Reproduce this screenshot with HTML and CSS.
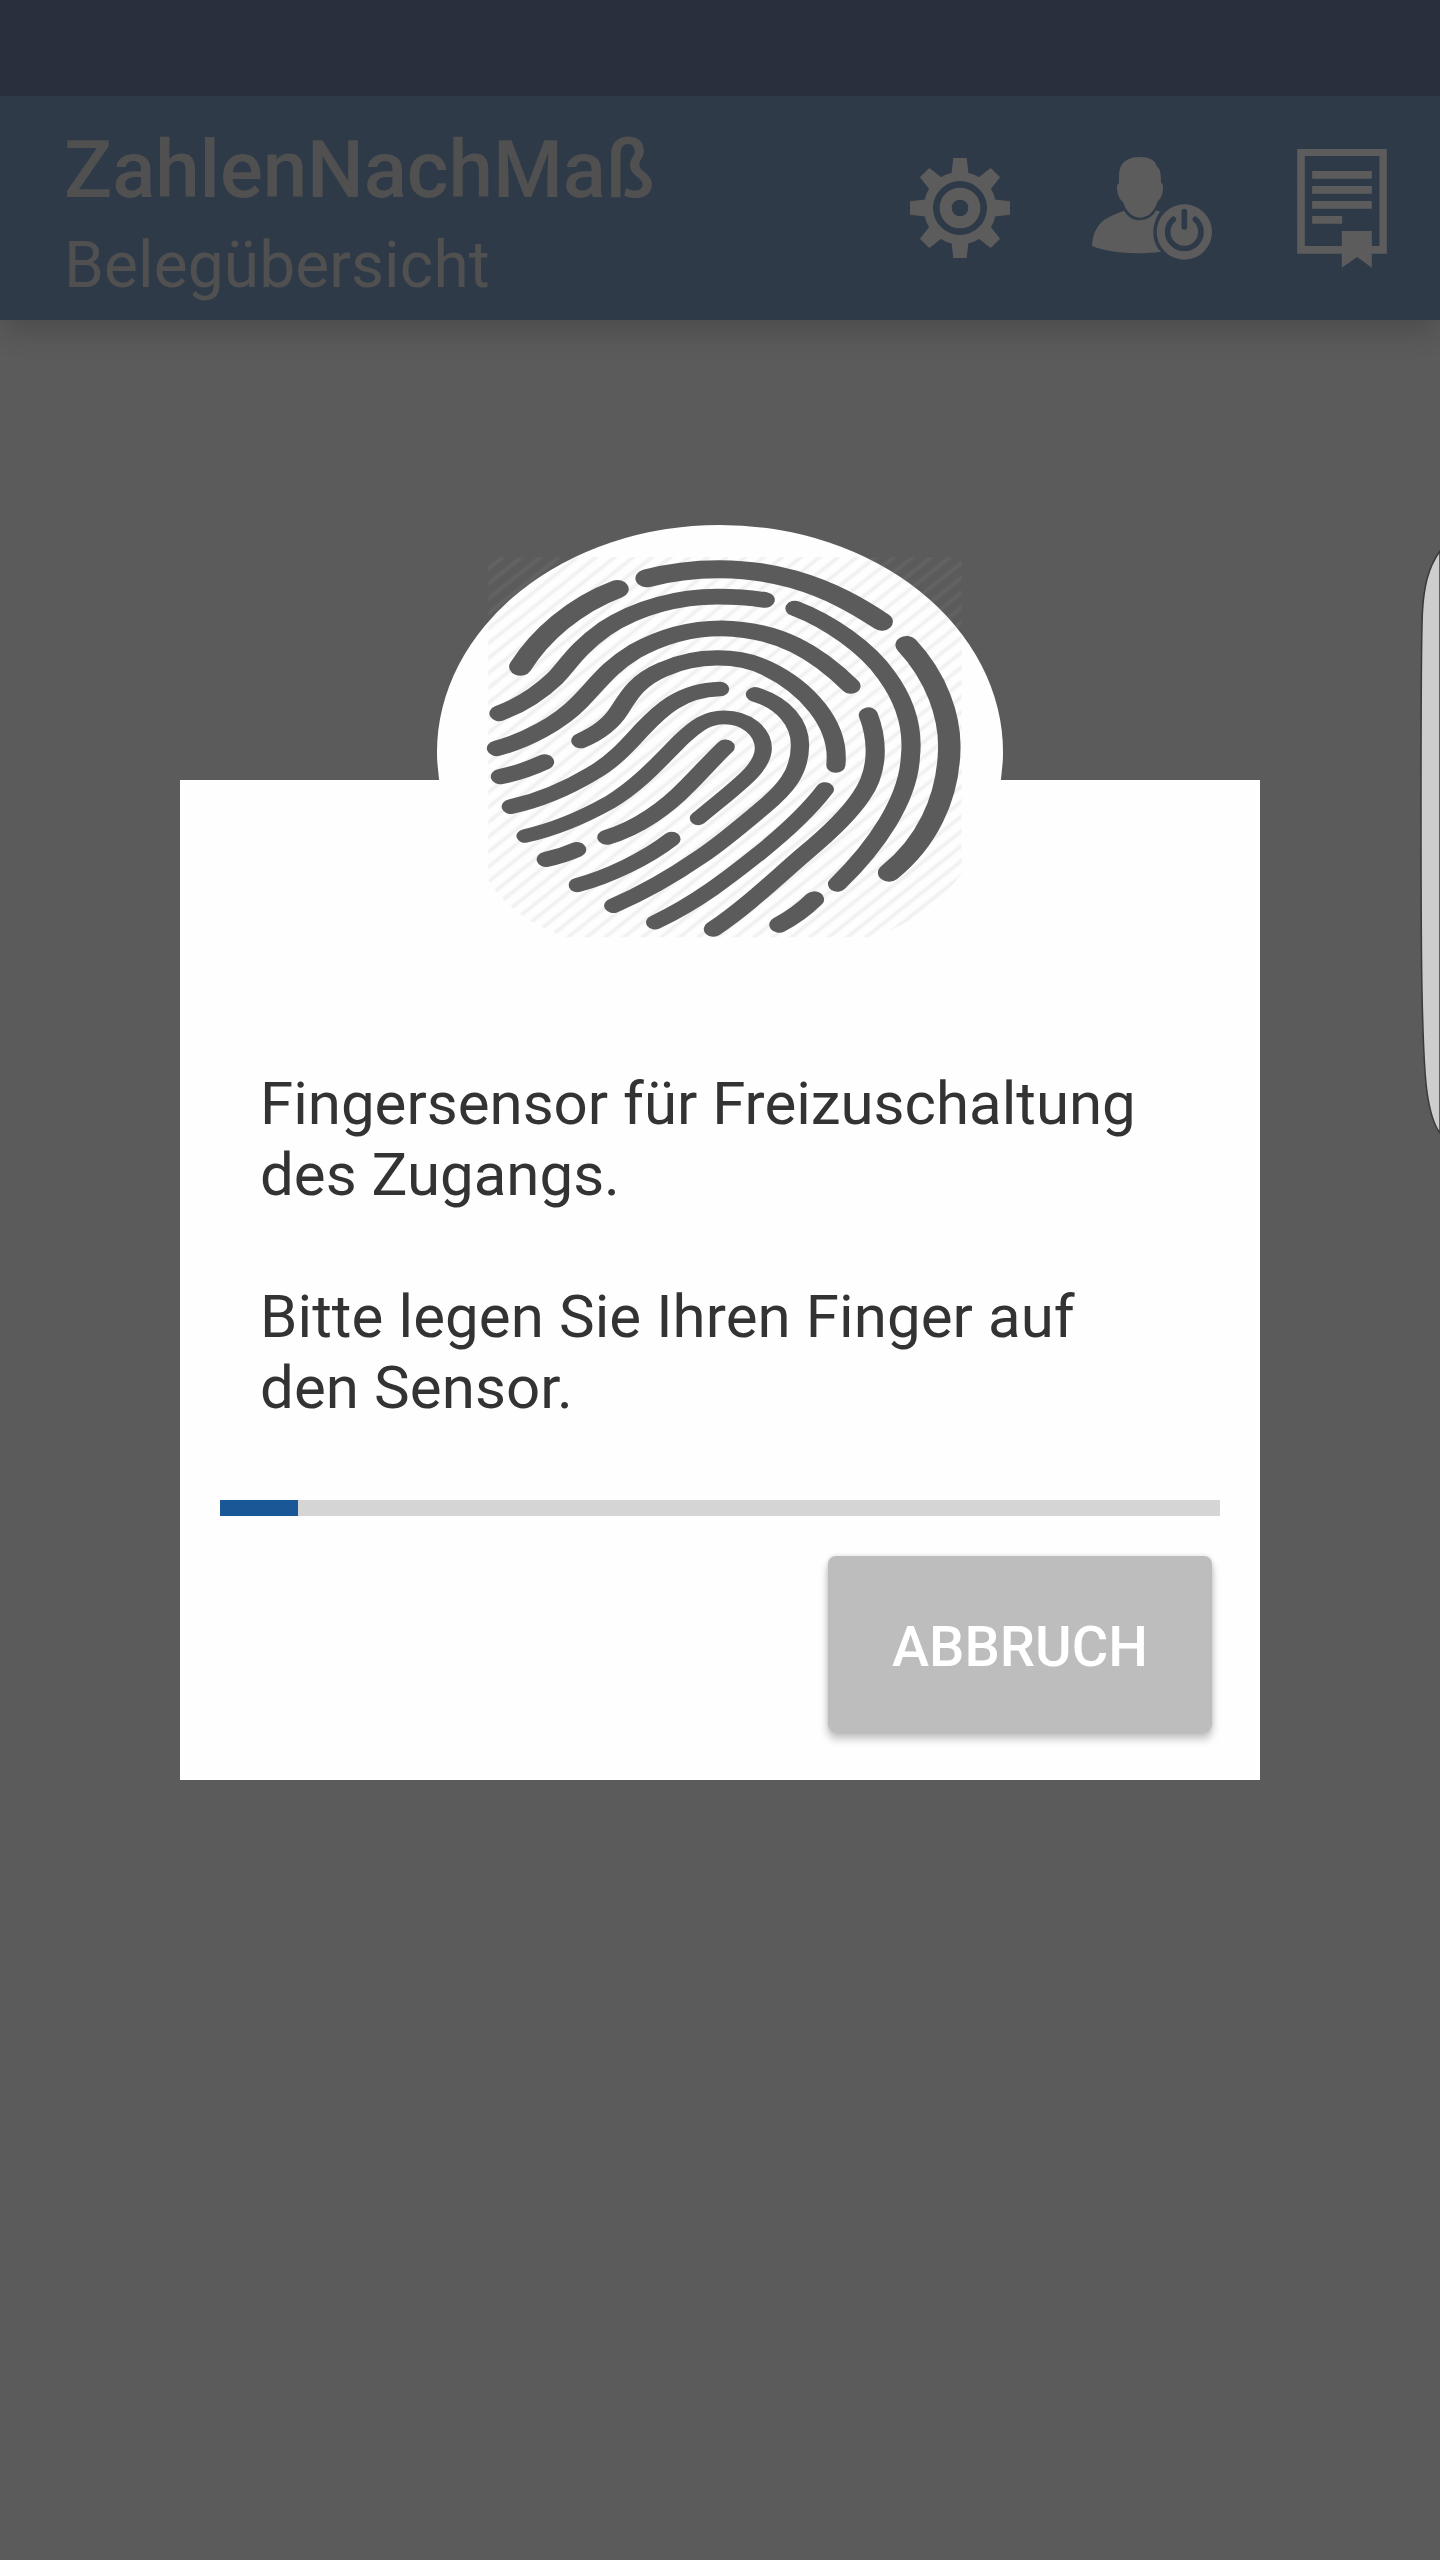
FILE: index.html
```html
<!DOCTYPE html>
<html lang="de">
<head>
<meta charset="utf-8">
<title>ZahlenNachMaß</title>
<link rel="stylesheet" href="styles.css">
</head>
<body>
<div class="screen">
  <div class="status-bar"></div>
  <header class="app-bar">
    <div class="titles">
      <h1 class="title">ZahlenNachMaß</h1>
      <p class="subtitle">Belegübersicht</p>
    </div>
    <div class="actions">
      <svg class="icon-gear" viewBox="-150 -150 300 300">
        <defs><path id="tooth" d="M-20-150H20L26-98H-26Z"/></defs>
        <circle r="95" fill="none" stroke="currentColor" stroke-width="28"/>
        <circle r="43" fill="none" stroke="currentColor" stroke-width="36"/>
        <g fill="currentColor">
          <use href="#tooth"/><use href="#tooth" transform="rotate(45)"/>
          <use href="#tooth" transform="rotate(90)"/><use href="#tooth" transform="rotate(135)"/>
          <use href="#tooth" transform="rotate(180)"/><use href="#tooth" transform="rotate(225)"/>
          <use href="#tooth" transform="rotate(270)"/><use href="#tooth" transform="rotate(315)"/>
        </g>
      </svg>
      <svg class="icon-user" viewBox="636 80 360 309">
        <g fill="currentColor">
          <path d="M780 80C805 80 826 88 830 108C840 116 843 126 843 157C850 159 850 170 848 186C845 200 839 208 832 215C824 243 804 262 780 262C756 262 738 243 729 215C718 206 713 194 711 178C710 168 711 161 717 159V132C718 96 744 80 780 80Z"/>
          <path d="M732 241C744 260 760 270 780 270C800 270 818 259 829 240L840 244C815 278 811 332 843 364C775 373 690 369 636 347C637 315 650 286 672 269C688 258 711 249 732 241Z"/>
          <circle cx="913" cy="305" r="83"/>
        </g>
        <path class="cutout" d="M880 267A50 50 0 1 0 946 267M913 244V290"/>
      </svg>
      <svg class="icon-doc" viewBox="172 87 269 357">
        <path fill="currentColor" fill-rule="evenodd" d="M172 87H441V401H396V443L352 411L306 443V401H172ZM195 108V378H306V333H396V378H419V108ZM217 153H396V176H217ZM217 198H396V221H217ZM217 243H396V266H217ZM217 288H307V311H217Z"/>
      </svg>
    </div>
  </header>
  <main class="content">
    <section class="dialog">
      <svg class="fingerprint" viewBox="0 0 1740 1380">
        <defs>
          <linearGradient id="hatch" gradientUnits="userSpaceOnUse" spreadMethod="repeat" x1="140" y1="333" x2="162.35" y2="355.35">
            <stop offset=".22" stop-color="#999" stop-opacity="0"/>
            <stop offset=".5" stop-color="#999" stop-opacity=".15"/>
            <stop offset=".78" stop-color="#999" stop-opacity="0"/>
          </linearGradient>
        </defs>
        <ellipse cx="870" cy="726" rx="849" ry="681" fill="#fefefe"/>
        <g transform="scale(1.25 1)">
          <path fill="url(#hatch)" d="M140 142H1276V1090Q1200 1225 1060 1282H330Q200 1230 140 1110Z"/>
          <g class="ridges">
            <path stroke-width="54" d="M217 470C264 378 344 287 450 237M520 205C632 168 760 168 872 208C960 240 1024 285 1084 335M1144 405C1215 500 1250 620 1246 725C1242 870 1190 1000 1102 1088"/>
            <path stroke-width="47" d="M166 610C220 585 262 550 300 505C330 468 350 418 420 356C500 290 600 260 690 260C730 260 768 263 804 270"/>
            <path stroke-width="47" d="M160 715C230 692 310 640 360 575C400 525 430 470 490 425C560 376 630 355 700 355C840 358 930 430 1010 528"/>
            <path stroke-width="46" d="M362 692C400 672 435 640 455 600C480 550 500 510 560 478C640 433 740 433 808 475C900 530 985 640 974 765"/>
            <path stroke-width="44" d="M696 537C600 540 550 605 508 660C475 705 440 755 390 790C330 835 260 872 194 890"/>
            <path stroke-width="41" d="M228 978C300 958 370 920 430 878C500 826 550 755 600 692C640 645 665 622 706 622C760 622 800 665 800 715C800 775 740 825 644 925"/>
            <path stroke-width="45" d="M424 982C500 955 570 890 616 830C650 788 680 745 709 711"/>
            <path stroke-width="44" d="M780 553C850 580 888 640 888 705C888 790 850 840 800 892C750 945 700 998 650 1040C580 1100 510 1150 440 1187"/>
            <path stroke-width="43" d="M354 1125C430 1100 520 1045 580 987"/>
            <path stroke-width="46" d="M279 1048Q318 1038 352 1019M169 800Q225 785 275 756"/>
            <path stroke-width="43" d="M948 838C910 900 850 970 790 1030C720 1100 640 1178 540 1237"/>
            <path stroke-width="46" d="M1052 615C1078 700 1074 790 1035 858C1010 905 960 968 900 1030C830 1105 760 1190 680 1257"/>
            <path stroke-width="46" d="M876 295C960 335 1050 415 1095 495C1145 580 1160 660 1153 740C1148 870 1070 1010 978 1122"/>
            <path stroke-width="48" d="M838 1244Q884 1215 922 1168"/>
          </g>
        </g>
      </svg>
      <div class="message">
        <p>Fingersensor für Freizuschaltung<br>des Zugangs.</p>
        <p>Bitte legen Sie Ihren Finger auf<br>den Sensor.</p>
      </div>
      <div class="progress"><div class="progress-value" style="width:7.8%"></div></div>
      <button class="cancel">ABBRUCH</button>
    </section>
  </main>
  <svg class="edge-handle" viewBox="0 0 24 600">
    <path d="M24 10C12 27 8 45 6.500 70C5 98 5 200 5 270C5 350 5 400 6 450C7 500 8 530 11 551C14 572 18 584 24 592Z"/>
  </svg>
</div>
</body>
</html>
```
FILE: styles.css
```css
* { box-sizing: border-box; margin: 0; padding: 0; }

body {
  background: #5b5b5b;
  font-family: Roboto, "Liberation Sans", sans-serif;
}

.screen {
  position: relative;
  display: flex;
  flex-direction: column;
  width: 1440px;
  height: 2560px;
  overflow: hidden;
  background: #5b5b5b;
}

.status-bar { position: relative; z-index: 1; height: 96px; background: #2a2f3d; }

.app-bar {
  display: flex;
  justify-content: space-between;
  height: 224px;
  padding: 0 53px 0 64px;
  background: #2f3a48;
  color: #505050;
  box-shadow: 0 14px 26px -2px rgba(0, 0, 0, .16);
}

.titles { padding-top: 27px; }
.title { font-size: 80px; line-height: 94px; font-weight: 500; letter-spacing: -.08px; }
.subtitle { margin-top: 11px; font-size: 64px; line-height: 75px; font-weight: 400; letter-spacing: .1px; }

.actions { display: flex; align-items: center; color: #5c5c5c; }
.icon-gear { width: 100px; height: 100px; margin-right: 82px; }
.icon-user { width: 120px; height: 103px; margin-right: 85px; }
.icon-doc { width: 90px; height: 119px; }
.cutout { fill: none; stroke: #2f3a48; stroke-width: 17; stroke-linecap: round; }

.content { padding: 460px 180px 0; }

.dialog {
  display: flex;
  flex-direction: column;
  height: 1000px;
  padding: 0 40px;
  background: #fefefe;
}

.fingerprint {
  align-self: center;
  flex: none;
  width: 580px;
  height: 460px;
  margin-top: -270px;
  overflow: visible;
}
.ridges { fill: none; stroke: #5b5b5b; stroke-linecap: round; stroke-linejoin: round; }

.message {
  padding: 98px 0 0 40px;
  color: #333;
  font-size: 60px;
  line-height: 71px;
  white-space: nowrap;
}
.message p + p { margin-top: 71px; letter-spacing: .09px; }

.progress { height: 16px; margin-top: 77px; background: #d5d5d5; }
.progress-value { height: 100%; background: #1a5796; }

.cancel {
  align-self: flex-end;
  width: 384px;
  height: 176px;
  margin: 40px 8px 0 0;
  padding-top: 5px;
  border: 0;
  border-radius: 8px;
  background: #bdbdbd;
  color: #fff;
  font: 500 56px Roboto, "Liberation Sans", sans-serif;
  box-shadow: 0 7px 9px rgba(0, 0, 0, .24), 0 0 5px rgba(0, 0, 0, .12);
}

.edge-handle {
  position: absolute;
  top: 541px;
  right: 0;
  width: 24px;
  height: 600px;
}
.edge-handle path { fill: #cdcdcd; stroke: #3a3a3a; stroke-width: 1.5; }
```
